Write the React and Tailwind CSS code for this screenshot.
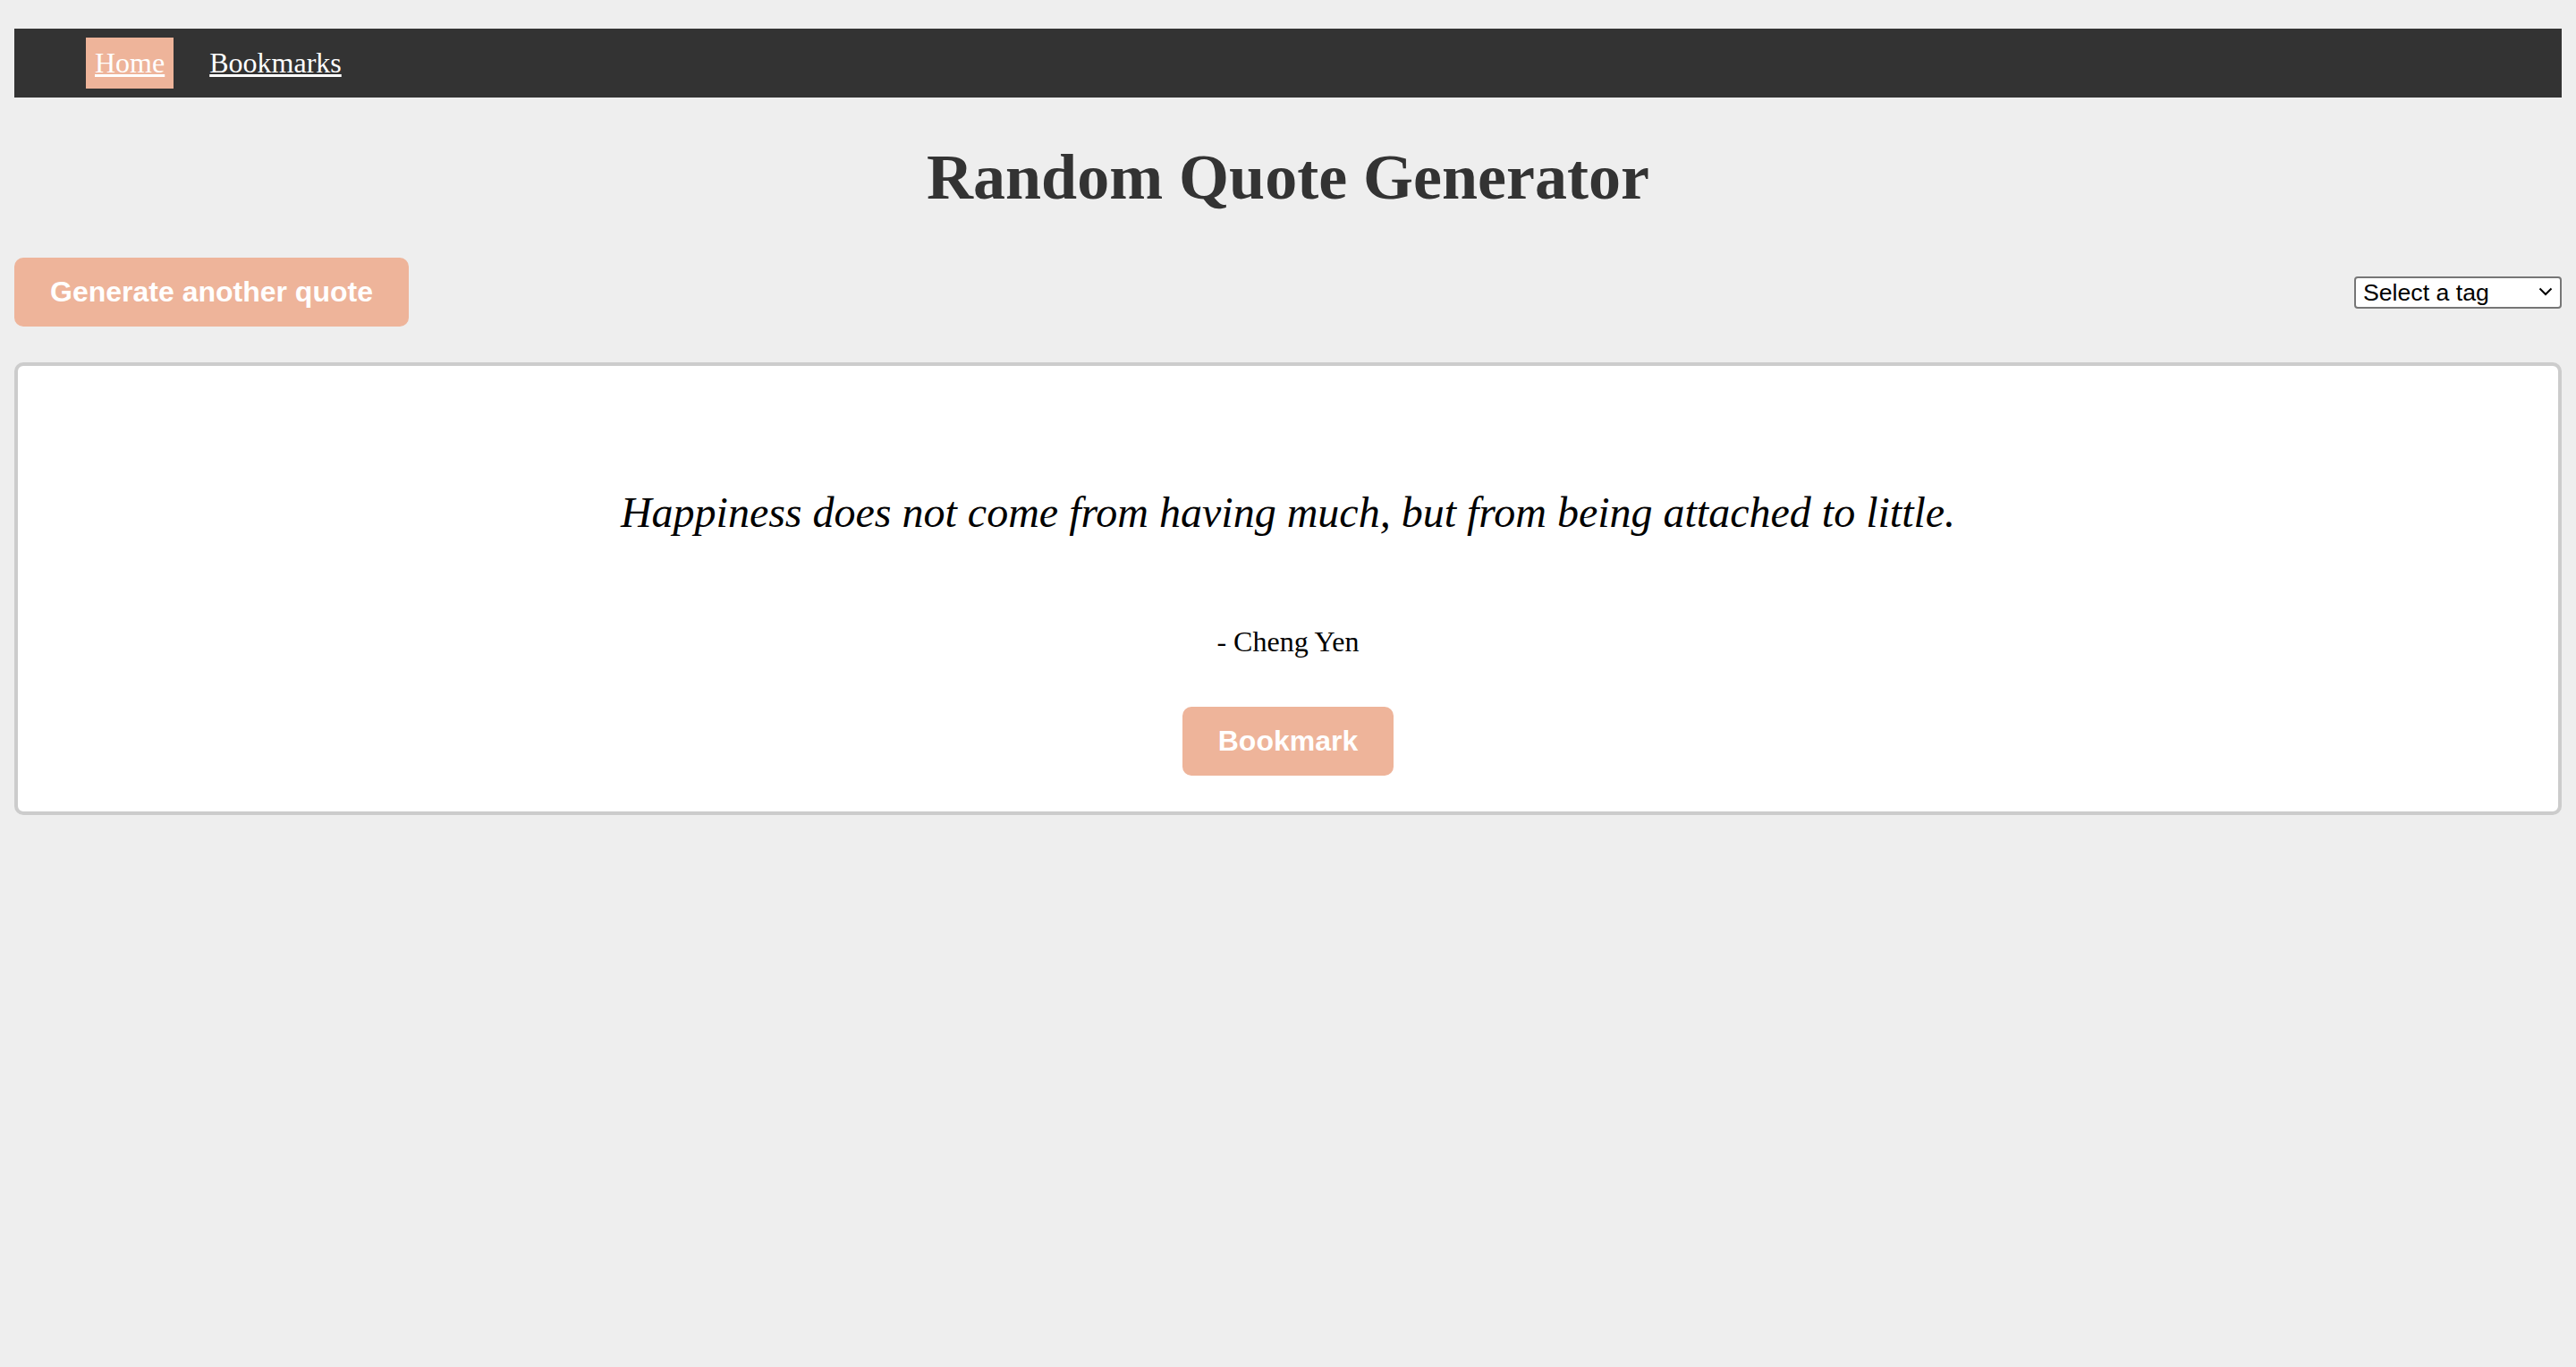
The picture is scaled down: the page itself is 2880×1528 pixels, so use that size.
import { useState } from 'react';

const QUOTE = {
    text: 'Happiness does not come from having much, but from being attached to little.',
    author: 'Cheng Yen',
};

export default function App() {
    const [tag, setTag] = useState('');

    return (
        <div className="min-h-screen bg-[#eeeeee] px-[16px] pt-[16px] pb-[16px] font-['Liberation_Serif','Times_New_Roman',serif]">
            <nav className="mt-[16px] bg-[#333333] py-[10px] pl-[80px]">
                <ul className="flex items-center gap-[30px]">
                    <li className="bg-[#eeb49a] p-[10px] text-[32px] leading-[normal]">
                        <a href="#" className="text-white underline">Home</a>
                    </li>
                    <li className="p-[10px] text-[32px] leading-[normal]">
                        <a href="#" className="text-white underline">Bookmarks</a>
                    </li>
                </ul>
            </nav>

            <h1 className="my-[48px] text-center text-[72px] font-bold leading-[normal] text-[#333333]">
                Random Quote Generator
            </h1>

            <div className="flex items-center justify-between">
                <button className="rounded-[10px] bg-[#eeb49a] px-[40px] py-[20px] font-['Liberation_Sans',Arial,sans-serif] text-[32px] font-bold leading-[normal] text-white">
                    Generate another quote
                </button>
                <div className="relative">
                    <select
                        value={tag}
                        onChange={(e) => setTag(e.target.value)}
                        className="block h-[36px] w-[232px] appearance-none rounded-[4px] border-2 border-[#767676] bg-white pl-[8px] font-['Liberation_Sans',Arial,sans-serif] text-[26.67px] leading-[normal] text-black"
                    >
                        <option value="">Select a tag</option>
                        <option value="wisdom">wisdom</option>
                        <option value="happiness">happiness</option>
                    </select>
                    <svg
                        className="pointer-events-none absolute right-[10px] top-[12px]"
                        width="16"
                        height="10"
                        viewBox="0 0 16 10"
                        fill="none"
                        stroke="#000"
                        strokeWidth="2"
                    >
                        <path d="M1.5 1.5 L8 8 L14.5 1.5" />
                    </svg>
                </div>
            </div>

            <div className="mt-[40px] rounded-[10px] border-4 border-[#cccccc] bg-white pt-[40px] pb-[40px] text-center text-black">
                <p className="mt-[96px] text-[48px] italic leading-[normal]">{QUOTE.text}</p>
                <p className="mt-[99px] text-[32px] leading-[normal]">- {QUOTE.author}</p>
                <button className="mt-[54px] rounded-[10px] bg-[#eeb49a] px-[40px] py-[20px] font-['Liberation_Sans',Arial,sans-serif] text-[32px] font-bold leading-[normal] text-white">
                    Bookmark
                </button>
            </div>
        </div>
    );
}
